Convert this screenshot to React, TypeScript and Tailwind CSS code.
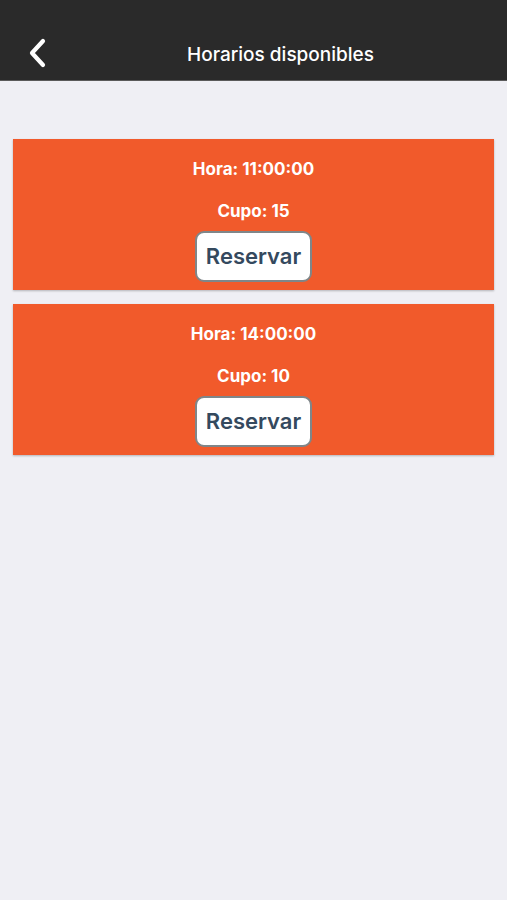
import React from "react";

const slots = [
  { hora: "11:00:00", cupo: 15 },
  { hora: "14:00:00", cupo: 10 },
];

function SlotCard({ hora, cupo }: { hora: string; cupo: number }) {
  return (
    <div className="flex flex-col items-center bg-[#f15a2b] pt-[19px] pb-[8px] shadow-[0_1px_2px_rgba(0,0,0,0.25)]">
      <p className="text-[17px] leading-[22px] font-bold text-white">Hora: {hora}</p>
      <p className="mt-[20px] text-[17px] leading-[22px] font-bold text-white">Cupo: {cupo}</p>
      <button className="mt-[9px] flex h-[51px] w-[117px] items-center justify-center rounded-[9px] border-2 border-[#7f8689] bg-white text-[22px] font-semibold text-[#34495e]">
        Reservar
      </button>
    </div>
  );
}

export default function App() {
  return (
    <div className="flex min-h-[900px] flex-col bg-[#efeff4]" style={{ fontFamily: "Inter, 'Noto Sans', sans-serif" }}>
      {/* header */}
      <div className="relative flex h-[81px] items-end justify-center border-b border-[#5a5a5a] bg-[#2a2a2a] pb-[12px] pl-[54px]">
        <svg className="absolute left-[28px] top-[38px]" width="20" height="30" viewBox="0 0 20 30" fill="none">
          <path d="M15 3 L4 15 L15 27" stroke="white" strokeWidth="4.2" strokeLinecap="round" strokeLinejoin="round" />
        </svg>
        <h1 className="text-[19px] leading-[26px] font-medium text-white">Horarios disponibles</h1>
      </div>

      {/* slots */}
      <div className="flex flex-col gap-[14px] px-[13px] pt-[58px]">
        {slots.map((s) => (
          <SlotCard key={s.hora} hora={s.hora} cupo={s.cupo} />
        ))}
      </div>
    </div>
  );
}
